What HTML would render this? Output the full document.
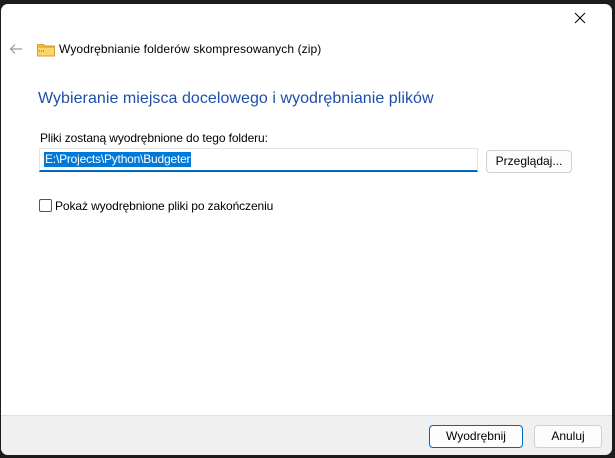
<!DOCTYPE html>
<html><head><meta charset="utf-8"><style>
html,body{margin:0;padding:0;width:615px;height:458px;background:#1c1c1c;overflow:hidden;font-family:"Segoe UI","Liberation Sans",sans-serif;font-size:12px;color:#000}
.win{position:absolute;left:1px;top:4px;width:611px;height:451px;background:#fff;border-radius:7px;overflow:hidden}
.abs{position:absolute;white-space:nowrap}
.footer{position:absolute;left:0;top:411px;width:611px;height:40px;background:#f0f0f0;border-top:1px solid #dfdfdf}
.btn{position:absolute;height:21px;border:1px solid #d0d0d0;border-radius:4px;background:#fdfdfd;text-align:center;line-height:21px;font-size:12px}
</style></head><body>
<div class="win">
  <svg class="abs" style="left:573px;top:8px" width="12" height="12"><path d="M1 1L11 11M11 1L1 11" stroke="#000" stroke-width="1"/></svg>
  <svg class="abs" style="left:8px;top:39px" width="14" height="12"><path d="M13 6H2M6 1.5L1.5 6L6 10.5" stroke="#9a9a9a" stroke-width="1.2" fill="none"/></svg>
  <svg class="abs" style="left:36px;top:37px" width="18" height="16"><path d="M0.5 3.5h6l1.5 1.5h9.5v10H0.5z" fill="#f2c14e" stroke="#d9a02a"/><rect x="0.5" y="6" width="17" height="9" fill="#fad66a" stroke="#d9a02a"/><path d="M2 10h5" stroke="#999" stroke-width="2" stroke-dasharray="1 1"/></svg>
  <div class="abs" style="left:58px;top:38px;font-size:12px;letter-spacing:0.1px">Wyodrębnianie folderów skompresowanych (zip)</div>
  <div class="abs" style="left:37px;top:86px;font-size:16px;color:#1d4fa6;letter-spacing:0.05px">Wybieranie miejsca docelowego i wyodrębnianie plików</div>
  <div class="abs" style="left:39px;top:127px;letter-spacing:-0.1px">Pliki zostaną wyodrębnione do tego folderu:</div>
  <div class="abs" style="left:38px;top:144px;width:437px;height:21px;border:1px solid #e3e3e3;border-bottom:2px solid #0067c0;background:#fff"></div>
  <div class="abs" style="left:43px;top:148px;height:15px;line-height:15px;background:#0078d7;color:#fff;padding:0 1px;letter-spacing:-0.2px">E:\Projects\Python\Budgeter</div>
  <div class="btn" style="left:485px;top:146px;width:84px">Przeglądaj...</div>
  <div class="abs" style="left:38px;top:195px;width:11px;height:11px;border:1px solid #555;border-radius:2px;background:#fff"></div>
  <div class="abs" style="left:54px;top:195px;letter-spacing:-0.1px">Pokaż wyodrębnione pliki po zakończeniu</div>
  <div class="footer"></div>
  <div class="btn" style="left:428px;top:421px;width:92px;border-color:#0067c0">Wyodrębnij</div>
  <div class="btn" style="left:533px;top:421px;width:66px">Anuluj</div>
</div>
</body></html>
